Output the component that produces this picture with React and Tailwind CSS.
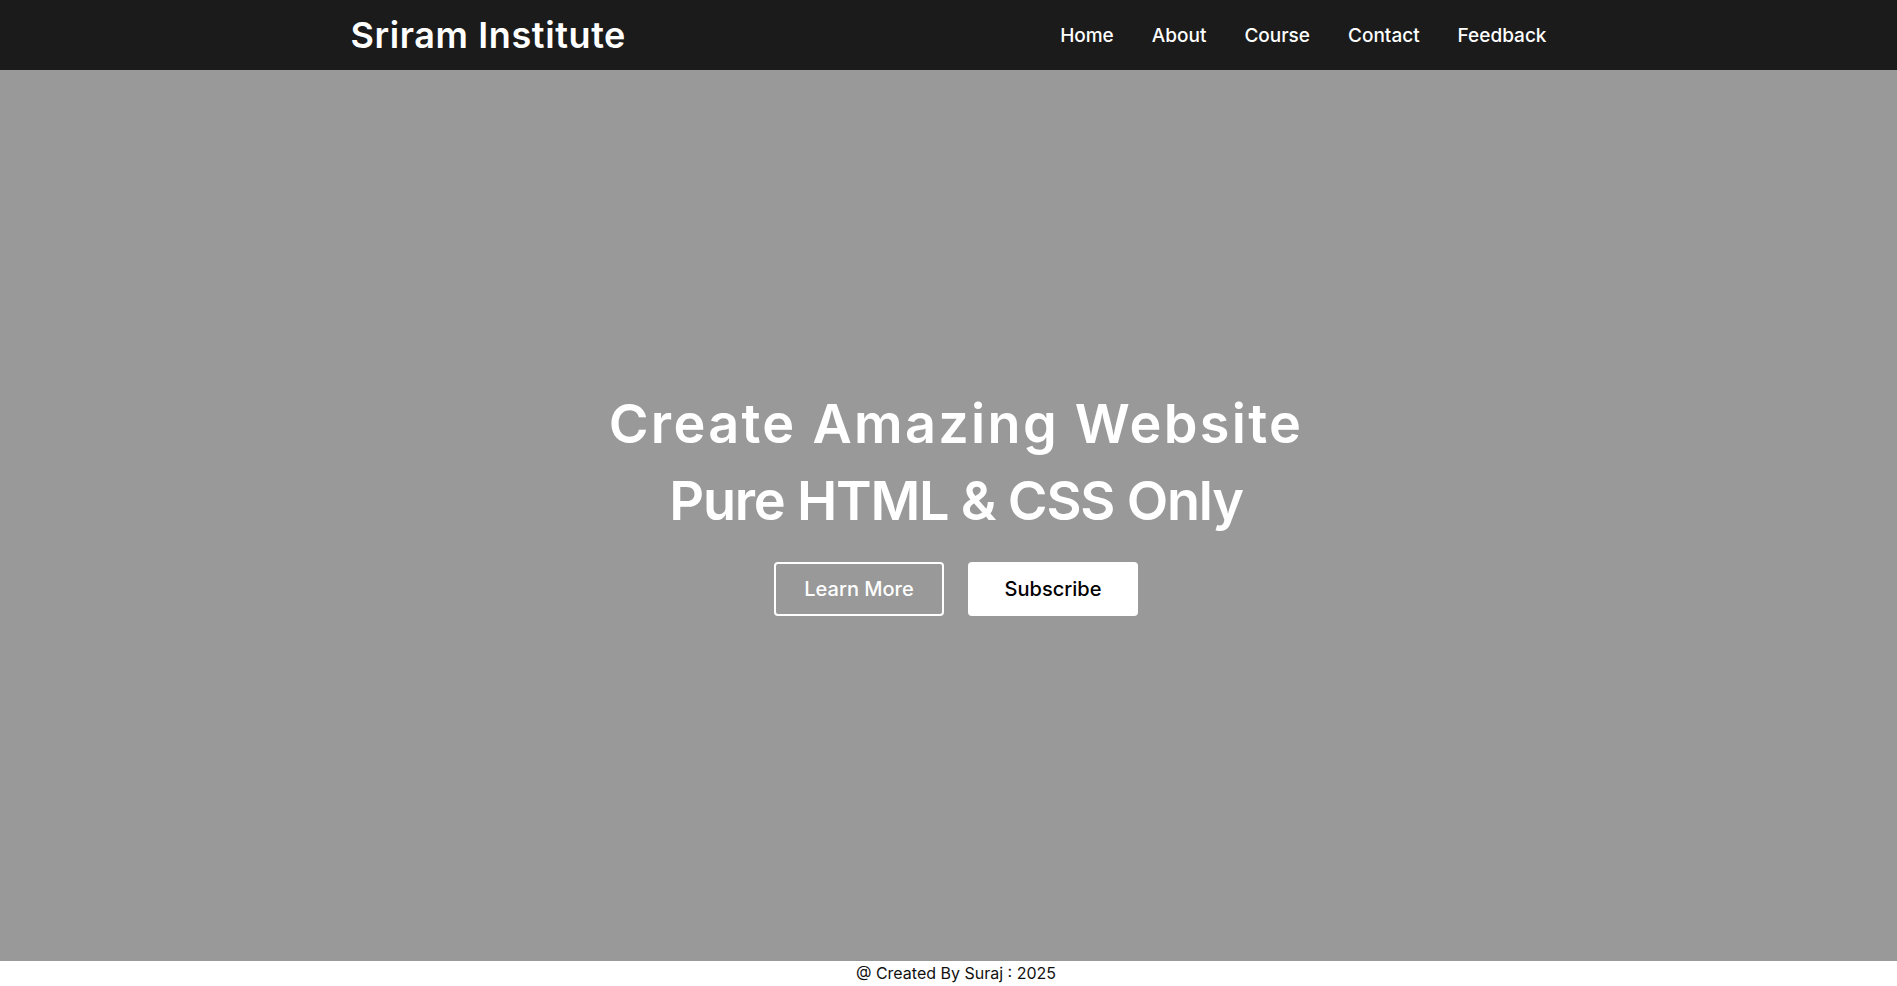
import React from "react";

const links = ["Home", "About", "Course", "Contact", "Feedback"];

const App = () => {
  return (
    <div className="min-h-screen flex flex-col bg-white" style={{ fontFamily: "Inter, 'Noto Sans', sans-serif" }}>
      {/* top bar */}
      <header className="h-[70px] bg-[#1b1b1b] shrink-0">
        <div className="w-[1200px] h-full mx-auto flex items-center justify-between pl-[2px] pr-[2px]">
          <div className="text-white text-[36px] font-semibold tracking-[0.6px] leading-none">Sriram Institute</div>
          <nav className="flex items-center gap-[38px] pt-[1px]">
            {links.map((l) => (
              <a key={l} href="#" className="text-white text-[19px] font-medium leading-none">
                {l}
              </a>
            ))}
          </nav>
        </div>
      </header>

      {/* hero */}
      <section className="h-[891px] bg-[#999999] flex flex-col items-center justify-center pb-[30px] pl-[15px]">
        <h1 className="text-white text-[54px] font-semibold leading-[77px] text-center">
          <span className="block tracking-[2.3px]">Create Amazing Website</span>
          <span className="block tracking-[-1.2px]">Pure HTML &amp; CSS Only</span>
        </h1>
        <div className="flex gap-[24px] mt-[23px]">
          <button className="w-[170px] h-[54px] border-2 border-white rounded-[4px] text-white text-[20px] font-medium">
            Learn More
          </button>
          <button className="w-[170px] h-[54px] bg-white rounded-[4px] text-black text-[20px] font-medium">
            Subscribe
          </button>
        </div>
      </section>

      {/* footer */}
      <footer className="h-[25px] bg-white flex items-start justify-center pl-[15px]">
        <p className="text-[16px] text-[#111] leading-[22px] pt-[1px]">@ Created By Suraj : 2025</p>
      </footer>
    </div>
  );
};

export default App;
